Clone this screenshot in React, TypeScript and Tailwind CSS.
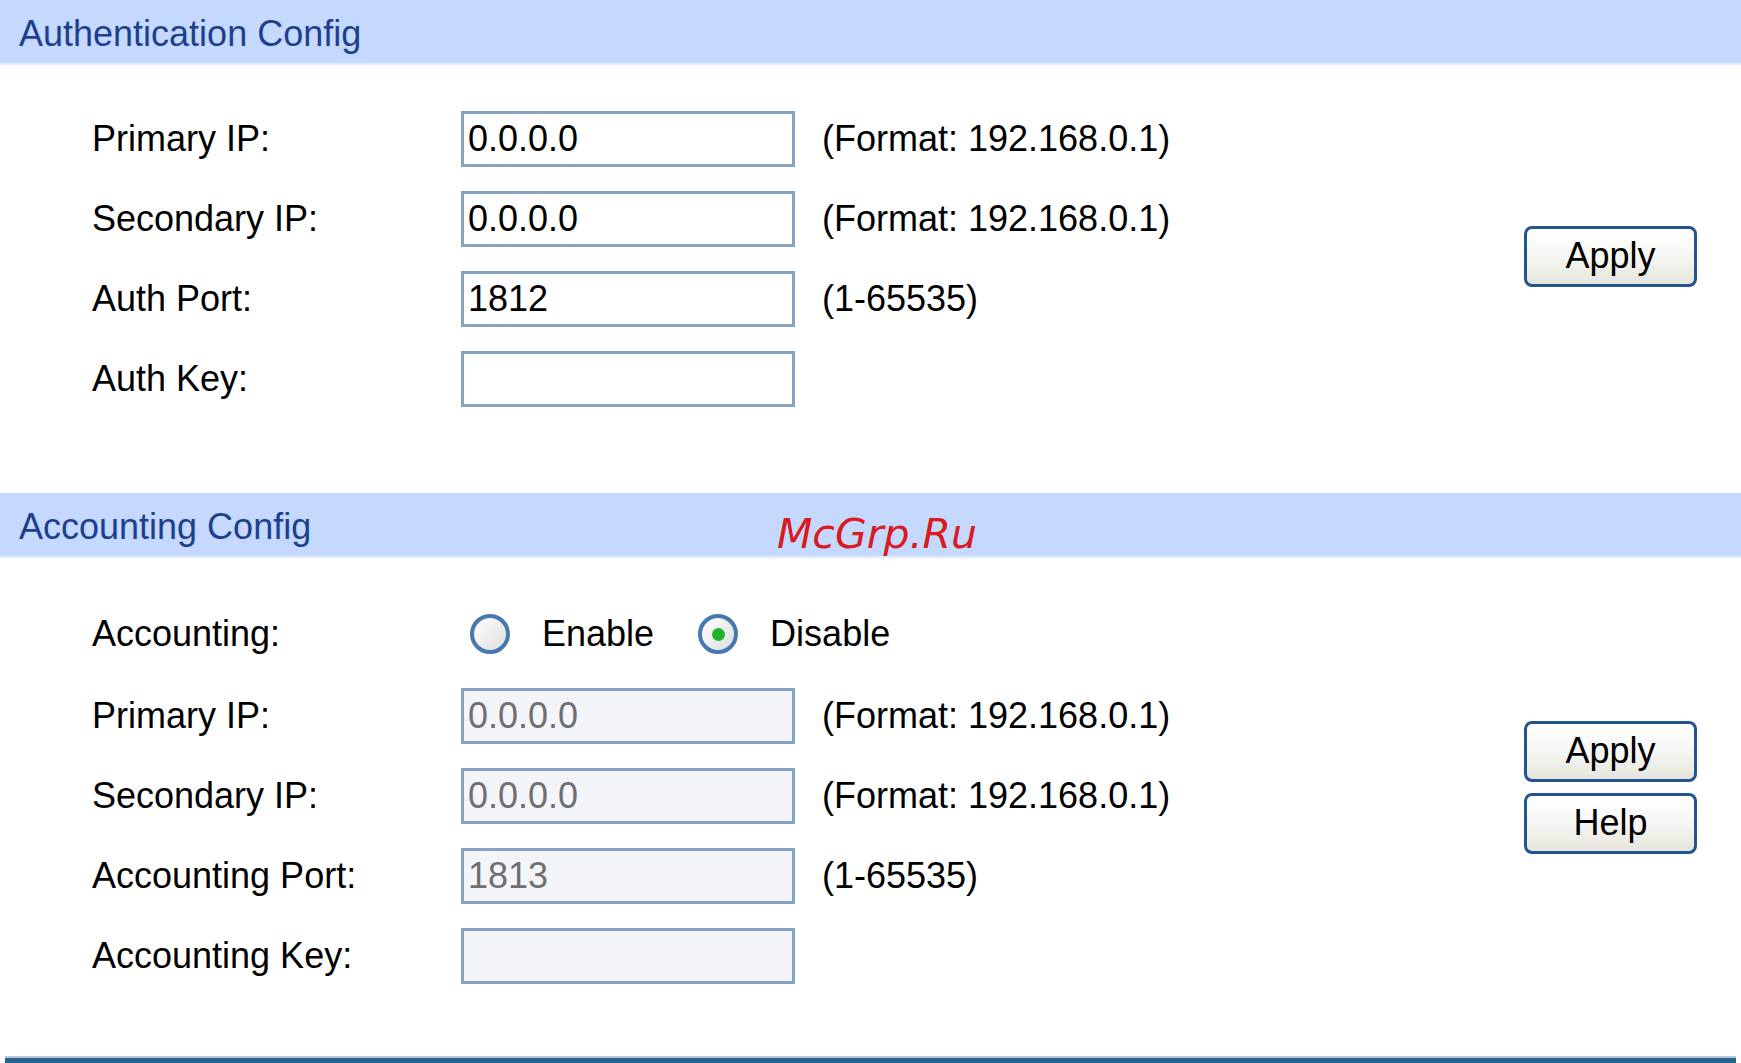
const font = "font-['Liberation_Sans',Arial,sans-serif]";

function SectionHeader({ title }: { title: string }) {
  return (
    <div className="h-[65px] bg-[#c4d9fd] border-b-2 border-[#e2edff] flex items-center pl-[19px]">
      <span className="text-[36px] text-[#1d3f8e] leading-none pt-[4px]">{title}</span>
    </div>
  );
}

function Field({ label, value, hint, disabled }: {
  label: string;
  value: string;
  hint?: string;
  disabled?: boolean;
}) {
  return (
    <div className="h-[80px] flex items-center">
      <div className="w-[369px] text-[36px] text-black leading-none">{label}</div>
      <div
        className={`w-[334px] h-[56px] border-[3px] border-[#86a3c6] flex items-center pl-[4px] text-[36px] leading-none ${
          disabled ? "bg-[#f4f5fa] text-[#6f6f6f]" : "bg-white text-black"
        }`}
      >
        {value}
      </div>
      {hint && <div className="ml-[27px] text-[36px] text-black leading-none">{hint}</div>}
    </div>
  );
}

function Radio({ checked }: { checked?: boolean }) {
  return (
    <div className="w-[40px] h-[40px] rounded-full border-[4px] border-[#4679ae] bg-gradient-to-br from-white to-[#dedede] flex items-center justify-center">
      {checked && <div className="w-[13px] h-[13px] rounded-full bg-[#21b22c]" />}
    </div>
  );
}

function Button({ label }: { label: string }) {
  return (
    <button className="w-[173px] h-[61px] rounded-[8px] border-[3px] border-[#22558f] bg-gradient-to-b from-white via-[#f6f6f4] to-[#e6e5dc] text-[36px] text-black leading-none">
      {label}
    </button>
  );
}

export default function App() {
  return (
    <div className={`w-[1741px] h-[1063px] bg-white relative overflow-hidden ${font}`}>
      <SectionHeader title="Authentication Config" />
      <div className="flex items-center pt-[34px] pb-[74px]">
        <div className="flex-1 pl-[92px]">
          <Field label="Primary IP:" value="0.0.0.0" hint="(Format: 192.168.0.1)" />
          <Field label="Secondary IP:" value="0.0.0.0" hint="(Format: 192.168.0.1)" />
          <Field label="Auth Port:" value="1812" hint="(1-65535)" />
          <Field label="Auth Key:" value="" />
        </div>
        <div className="w-[217px] pb-[6px]">
          <Button label="Apply" />
        </div>
      </div>

      <SectionHeader title="Accounting Config" />
      <div className="flex items-center pt-[34px]">
        <div className="flex-1 pl-[92px]">
          <div className="h-[84px] flex items-center">
            <div className="w-[378px] text-[36px] text-black leading-none">Accounting:</div>
            <Radio />
            <span className="ml-[32px] text-[36px] leading-none">Enable</span>
            <div className="ml-[44px]">
              <Radio checked />
            </div>
            <span className="ml-[32px] text-[36px] leading-none">Disable</span>
          </div>
          <Field label="Primary IP:" value="0.0.0.0" hint="(Format: 192.168.0.1)" disabled />
          <Field label="Secondary IP:" value="0.0.0.0" hint="(Format: 192.168.0.1)" disabled />
          <Field label="Accounting Port:" value="1813" hint="(1-65535)" disabled />
          <Field label="Accounting Key:" value="" disabled />
        </div>
        <div className="w-[217px] flex flex-col gap-[11px] pb-[14px]">
          <Button label="Apply" />
          <Button label="Help" />
        </div>
      </div>

      <div className="mx-[5px] mt-[60px] border-t-2 border-[#b8c8d8] h-[10px] bg-[#246592]" />

      <div className="absolute left-[777px] top-[514px] text-[41px] italic text-[#d91a1f] leading-none font-['DejaVu_Sans',sans-serif]">
        McGrp.Ru
      </div>
    </div>
  );
}
